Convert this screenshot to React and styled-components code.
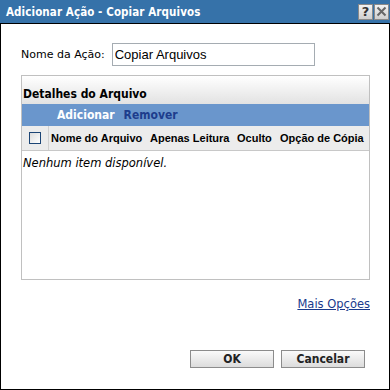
import React from 'react'
import styled, { createGlobalStyle } from 'styled-components'

const GlobalStyle = createGlobalStyle`
  html, body {
    margin: 0;
    padding: 0;
    background: #ffffff;
  }
`

const Dialog = styled.div`
  width: 390px;
  height: 390px;
  box-sizing: border-box;
  border: 1px solid #000;
  border-top: none;
  display: flex;
  flex-direction: column;
  background: #fff;
  font-family: "Liberation Sans", Arial, sans-serif;
`

const TitleBar = styled.div`
  height: 23px;
  background: #3672a9;
  border-bottom: 1px solid #000;
  display: flex;
  align-items: center;
  justify-content: space-between;
  padding: 0 1px 0 6px;
  margin: 0 -1px;
`

const Title = styled.span`
  color: #fff;
  font-family: "DejaVu Sans Condensed", "DejaVu Sans", sans-serif;
  font-weight: bold;
  font-size: 11.5px;
  letter-spacing: 0.1px;
`

const TitleButtons = styled.div`
  display: flex;
  gap: 1px;
`

const TitleButton = styled.div`
  width: 15px;
  height: 16px;
  background: linear-gradient(#f2f2f2, #cfcfcf);
  border: 1px solid #8a8a8a;
  box-sizing: border-box;
  display: flex;
  align-items: center;
  justify-content: center;
  color: #333;
  font-family: "DejaVu Sans", sans-serif;
  font-weight: bold;
  font-size: 13px;
`

const Body = styled.div`
  flex: 1;
  display: flex;
  flex-direction: column;
  padding: 19px 19px 0 20px;
`

const NameRow = styled.div`
  display: flex;
  align-items: center;
  gap: 7px;
`

const Label = styled.label`
  font-family: "DejaVu Sans", sans-serif;
  font-size: 11px;
  color: #000;
`

const TextInput = styled.input`
  width: 203px;
  height: 23px;
  box-sizing: border-box;
  border: 1px solid #a5acb2;
  padding: 0 2px;
  font-family: "Liberation Sans", Arial, sans-serif;
  font-size: 13px;
  color: #000;
  outline: none;
`

const Panel = styled.div`
  margin-top: 9px;
  height: 203px;
  border: 1px solid #c0c0c0;
  display: flex;
  flex-direction: column;
`

const PanelHeader = styled.div`
  height: 28px;
  box-sizing: border-box;
  display: flex;
  align-items: flex-end;
  padding: 0 0 3px 1px;
  background: linear-gradient(#ffffff, #e2e2e2);
  font-family: "DejaVu Sans Condensed", "DejaVu Sans", sans-serif;
  font-weight: bold;
  font-size: 12px;
  color: #000;
`

const Toolbar = styled.div`
  height: 22px;
  background: #6a96cc;
  display: flex;
  align-items: center;
  gap: 9px;
  padding-left: 35px;
`

const ToolLink = styled.span`
  font-family: "DejaVu Sans Condensed", "DejaVu Sans", sans-serif;
  font-weight: bold;
  font-size: 12px;
  color: ${p => (p.$active ? '#ffffff' : '#1d3d8c')};
`

const ColumnHeader = styled.div`
  height: 24px;
  background: #ececec;
  border-bottom: 1px solid #c8c8c8;
  display: flex;
  align-items: center;
`

const CheckCell = styled.div`
  width: 26px;
  height: 100%;
  border-right: 1px solid #d0d0d0;
  display: flex;
  align-items: center;
  justify-content: center;
`

const CheckBox = styled.span`
  width: 12px;
  height: 12px;
  box-sizing: border-box;
  border: 1px solid #1c4575;
  background: linear-gradient(135deg, #dcdcdc, #ffffff);
`

const ColumnTitle = styled.span`
  width: ${p => p.$width || 'auto'};
  flex: none;
  box-sizing: border-box;
  padding-left: 2px;
  font-family: "Liberation Sans", Arial, sans-serif;
  font-weight: bold;
  font-size: 11px;
  color: #000;
  white-space: nowrap;
`

const EmptyText = styled.div`
  font-family: "DejaVu Sans", sans-serif;
  font-style: italic;
  font-size: 11.5px;
  color: #000;
  padding: 5px 0 0 1px;
`

const MoreRow = styled.div`
  display: flex;
  justify-content: flex-end;
  margin-top: 17px;
`

const MoreLink = styled.a`
  font-family: "DejaVu Sans", sans-serif;
  font-size: 11.5px;
  color: #1a3a8c;
  text-decoration: underline;
`

const Buttons = styled.div`
  display: flex;
  justify-content: flex-end;
  gap: 7px;
  margin-top: 39px;
  padding-right: 5px;
`

const Button = styled.button`
  width: 84px;
  height: 18px;
  box-sizing: border-box;
  border: 1px solid #8c8c8c;
  background: linear-gradient(#fafafa, #dcdcdc);
  font-family: "DejaVu Sans Condensed", "DejaVu Sans", sans-serif;
  font-weight: bold;
  font-size: 12px;
  color: #222;
  padding: 0;
  line-height: 16px;
`

const columns = [
  { title: 'Nome do Arquivo', width: '99px' },
  { title: 'Apenas Leitura', width: '87px' },
  { title: 'Oculto', width: '43px' },
  { title: 'Opção de Cópia' }
]

function App () {
  return (
    <>
      <GlobalStyle />
      <Dialog>
        <TitleBar>
          <Title>Adicionar Ação - Copiar Arquivos</Title>
          <TitleButtons>
            <TitleButton>?</TitleButton>
            <TitleButton>
              <svg width='11' height='11' viewBox='0 0 11 11'>
                <path d='M1.5 1.5 L9.5 9.5 M9.5 1.5 L1.5 9.5' stroke='#666' strokeWidth='2' />
              </svg>
            </TitleButton>
          </TitleButtons>
        </TitleBar>
        <Body>
          <NameRow>
            <Label>Nome da Ação:</Label>
            <TextInput defaultValue='Copiar Arquivos' />
          </NameRow>
          <Panel>
            <PanelHeader>Detalhes do Arquivo</PanelHeader>
            <Toolbar>
              <ToolLink $active>Adicionar</ToolLink>
              <ToolLink>Remover</ToolLink>
            </Toolbar>
            <ColumnHeader>
              <CheckCell><CheckBox /></CheckCell>
              {columns.map(col => (
                <ColumnTitle key={col.title} $width={col.width}>{col.title}</ColumnTitle>
              ))}
            </ColumnHeader>
            <EmptyText>Nenhum item disponível.</EmptyText>
          </Panel>
          <MoreRow>
            <MoreLink href='#'>Mais Opções</MoreLink>
          </MoreRow>
          <Buttons>
            <Button>OK</Button>
            <Button>Cancelar</Button>
          </Buttons>
        </Body>
      </Dialog>
    </>
  )
}

export default App
